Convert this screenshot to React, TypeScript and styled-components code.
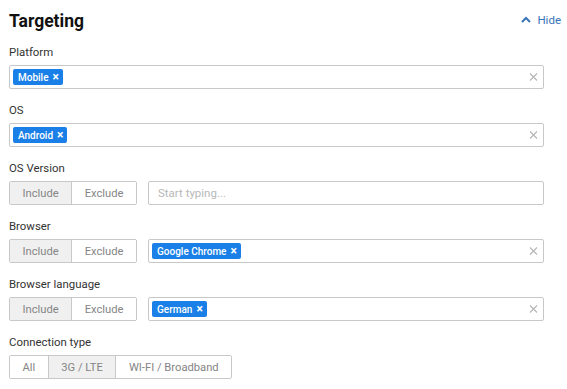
import styled, { createGlobalStyle } from 'styled-components';

const GlobalStyle = createGlobalStyle`
  body {
    margin: 0;
    background: #fff;
    font-family: Roboto, "Liberation Sans", Arial, sans-serif;
    color: #333;
  }
`;

type Option = { label: string; active?: boolean };

const ChevronUp = () => (
  <svg width="10" height="7" viewBox="0 0 10 7" fill="none">
    <path d="M1 6L5 2L9 6" stroke="currentColor" strokeWidth="2" />
  </svg>
);

const ClearIcon = () => (
  <svg width="9" height="9" viewBox="0 0 9 9">
    <path d="M1 1L8 8M8 1L1 8" stroke="#b5b5b5" strokeWidth="1.1" />
  </svg>
);

const Segmented = ({ options }: { options: Option[] }) => (
  <SegmentGroup>
    {options.map((o) => (
      <SegmentButton key={o.label} $active={o.active}>
        {o.label}
      </SegmentButton>
    ))}
  </SegmentGroup>
);

const TagInput = ({ tags, placeholder }: { tags: string[]; placeholder?: string }) => (
  <Field>
    {tags.length ? (
      <>
        {tags.map((t) => (
          <Tag key={t}>
            {t}
            <TagX>×</TagX>
          </Tag>
        ))}
        <Clear>
          <ClearIcon />
        </Clear>
      </>
    ) : (
      <Placeholder>{placeholder}</Placeholder>
    )}
  </Field>
);

const includeExclude = [{ label: 'Include', active: true }, { label: 'Exclude' }];

const App = () => {
  return (
    <>
      <GlobalStyle />
      <Panel>
        <Header>
          <Title>Targeting</Title>
          <HideLink>
            <ChevronUp />
            Hide
          </HideLink>
        </Header>

        <Section>
          <Label>Platform</Label>
          <Row>
            <TagInput tags={['Mobile']} />
          </Row>
        </Section>

        <Section>
          <Label>OS</Label>
          <Row>
            <TagInput tags={['Android']} />
          </Row>
        </Section>

        <Section>
          <Label>OS Version</Label>
          <Row>
            <Segmented options={includeExclude} />
            <TagInput tags={[]} placeholder="Start typing..." />
          </Row>
        </Section>

        <Section>
          <Label>Browser</Label>
          <Row>
            <Segmented options={includeExclude} />
            <TagInput tags={['Google Chrome']} />
          </Row>
        </Section>

        <Section>
          <Label>Browser language</Label>
          <Row>
            <Segmented options={includeExclude} />
            <TagInput tags={['German']} />
          </Row>
        </Section>

        <Section>
          <Label>Connection type</Label>
          <Row>
            <Segmented
              options={[{ label: 'All' }, { label: '3G / LTE', active: true }, { label: 'WI-FI / Broadband' }]}
            />
          </Row>
        </Section>
      </Panel>
    </>
  );
};

export default App;

const Panel = styled.div`
  width: 567px;
  box-sizing: border-box;
  padding: 9px 6px 0 9px;
`;

const Header = styled.div`
  display: flex;
  justify-content: space-between;
  align-items: center;
  height: 24px;
  margin-bottom: 9px;
`;

const Title = styled.h2`
  margin: 0;
  font-size: 17.5px;
  line-height: 24px;
  font-weight: 700;
  color: #111;
`;

const HideLink = styled.a`
  display: flex;
  align-items: center;
  gap: 6px;
  font-size: 11.5px;
  color: #3a74b8;
  cursor: pointer;
  margin-top: -3px;
`;

const Section = styled.div`
  display: flex;
  flex-direction: column;
  gap: 5px;
  margin-bottom: 11px;
  width: 535px;
  &:last-child {
    margin-bottom: 0;
  }
`;

const Label = styled.div`
  font-size: 11.4px;
  line-height: 16px;
  margin-top: 2px;
  color: #333;
`;

const Row = styled.div`
  display: flex;
  align-items: center;
  gap: 11px;
  height: 24px;
`;

const SegmentGroup = styled.div`
  display: flex;
  height: 24px;
  border: 1px solid #c8c8c8;
  border-radius: 2px;
  box-sizing: border-box;
  overflow: hidden;
  flex-shrink: 0;
`;

const SegmentButton = styled.button<{ $active?: boolean }>`
  font-family: inherit;
  font-size: 11.2px;
  color: #858585;
  background: ${(p) => (p.$active ? '#f0f0f0' : '#fff')};
  border: none;
  border-left: 1px solid #c8c8c8;
  padding: 0 12.5px;
  &:first-child {
    border-left: none;
  }
`;

const Field = styled.div`
  position: relative;
  flex: 1;
  display: flex;
  align-items: center;
  gap: 4px;
  height: 24px;
  box-sizing: border-box;
  border: 1px solid #c8c8c8;
  border-radius: 2px;
  padding: 0 3px;
  background: #fff;
`;

const Tag = styled.span`
  display: inline-flex;
  align-items: center;
  gap: 4px;
  height: 16px;
  padding: 0 4px 0 5px;
  border-radius: 2px;
  background: #1a7fe6;
  color: #fff;
  font-size: 10px;
  font-weight: 500;
`;

const TagX = styled.span`
  font-size: 12px;
  font-weight: 700;
  line-height: 1;
`;

const Clear = styled.span`
  position: absolute;
  right: 5px;
  top: 50%;
  transform: translateY(-50%);
  display: flex;
`;

const Placeholder = styled.span`
  font-size: 11.5px;
  color: #b8b8b8;
  padding-left: 6px;
`;
